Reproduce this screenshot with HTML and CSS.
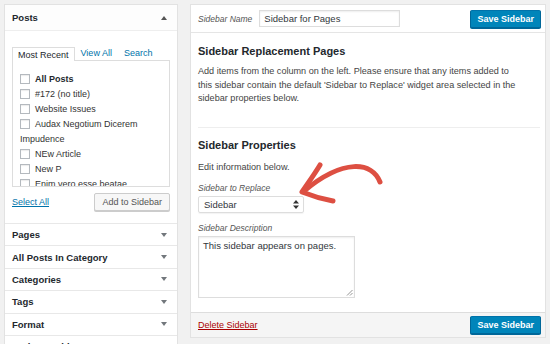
FILE: index.html
```html
<!DOCTYPE html>
<html>
<head>
<meta charset="utf-8">
<link rel="stylesheet" href="styles.css">
</head>
<body>
<div class="page">
  <div class="left">
    <div class="sec posts">
      <div class="sec-head open"><span>Posts</span><span class="tri up"></span></div>
      <div class="posts-body">
        <div class="tabs">
          <span class="tab active">Most Recent</span>
          <span class="tab">View All</span>
          <span class="tab">Search</span>
        </div>
        <div class="tabpanel">
          <div class="item bold"><span class="cb"></span>All Posts</div>
          <div class="item"><span class="cb"></span>#172 (no title)</div>
          <div class="item"><span class="cb"></span>Website Issues</div>
          <div class="item"><span class="cb"></span>Audax Negotium Dicerem</div>
          <div class="item plain">Impudence</div>
          <div class="item"><span class="cb"></span>NEw Article</div>
          <div class="item"><span class="cb"></span>New P</div>
          <div class="item"><span class="cb"></span>Enim vero esse beatae</div>
        </div>
        <div class="actions">
          <a class="link">Select All</a>
          <span class="btn">Add to Sidebar</span>
        </div>
      </div>
    </div>
    <div class="sec row"><span>Pages</span><span class="tri"></span></div>
    <div class="sec row"><span>All Posts In Category</span><span class="tri"></span></div>
    <div class="sec row"><span>Categories</span><span class="tri"></span></div>
    <div class="sec row"><span>Tags</span><span class="tri"></span></div>
    <div class="sec row"><span>Format</span><span class="tri"></span></div>
    <div class="sec row"><span>Author Archives</span><span class="tri"></span></div>
  </div>

  <div class="right">
    <div class="rhead">
      <span class="lbl">Sidebar Name</span>
      <span class="input">Sidebar for Pages</span>
      <span class="btn primary">Save Sidebar</span>
    </div>
    <div class="rbody">
      <h2 class="h first">Sidebar Replacement Pages</h2>
      <p class="txt">Add items from the column on the left. Please ensure that any items added to this sidebar contain the default 'Sidebar to Replace' widget area selected in the sidebar properties below.</p>
      <div class="divider"></div>
      <h2 class="h">Sidebar Properties</h2>
      <p class="txt edit">Edit information below.</p>
      <div class="lbl field">Sidebar to Replace</div>
      <div class="select"><span>Sidebar</span>
        <svg class="updown" width="6" height="9" viewBox="0 0 6 9"><path d="M3 0 L6 3.5 H0 Z M3 9 L6 5.5 H0 Z" fill="#333"/></svg>
      </div>
      <div class="lbl field desc">Sidebar Description</div>
      <div class="textarea">This sidebar appears on pages.
        <svg class="grip" width="7" height="7" viewBox="0 0 7 7"><path d="M6.5 1 L1 6.5 M6.5 4 L4 6.5" stroke="#888" stroke-width="0.9"/></svg>
      </div>
    </div>
    <div class="rfoot">
      <a class="del">Delete Sidebar</a>
      <span class="btn primary">Save Sidebar</span>
    </div>
  </div>

  <svg class="arrow" width="550" height="344" viewBox="0 0 550 344">
    <path d="M380 182 C372 162 344 158 304 191" fill="none" stroke="#dd4f42" stroke-width="5" stroke-linecap="round"/>
    <path d="M320 165 C314 175 308 183 302 192 C312 196 322 199 333 201" fill="none" stroke="#dd4f42" stroke-width="5" stroke-linecap="round" stroke-linejoin="round"/>
  </svg>
</div>
</body>
</html>
```
FILE: styles.css
```css
* { box-sizing: border-box; }
html, body { margin: 0; padding: 0; }
body {
  background: #f1f1f1;
  font-family: "Liberation Sans", Arial, sans-serif;
  font-size: 9px;
  color: #444;
  width: 550px;
  height: 344px;
  overflow: hidden;
}
.page {
  position: relative;
  display: flex;
  align-items: flex-start;
  padding: 4px 0 0 4px;
  gap: 12px;
  height: 344px;
}
.left {
  width: 174px;
  flex: none;
  background: #fff;
  border: 1px solid #e2e2e2;
}
.sec-head {
  height: 26px;
  display: flex;
  align-items: center;
  justify-content: space-between;
  padding: 0 8px 0 7px;
  font-weight: bold;
  font-size: 9.5px;
  color: #23282d;
  background: #fdfdfd;
  border-bottom: 1px solid #eee;
}
.tri {
  width: 0; height: 0;
  border-left: 3px solid transparent;
  border-right: 3px solid transparent;
  border-top: 4px solid #72777c;
  margin-right: 2px;
}
.tri.up {
  border-top: none;
  border-bottom: 4px solid #555;
}
.posts-body {
  padding: 15px 7px 12px 7px;
}
.tabs {
  display: flex;
  height: 14px;
  align-items: stretch;
}
.tab {
  padding: 0 6px;
  display: flex;
  align-items: center;
  color: #0073aa;
  font-size: 9px;
}
.tab.active {
  color: #23282d;
  border: 1px solid #ddd;
  border-bottom: none;
  background: #fff;
  position: relative;
  top: 1px;
  padding: 0 5px;
}
.tabpanel {
  border: 1px solid #ddd;
  height: 127px;
  overflow: hidden;
  padding: 10px 7px 0 7px;
  background: #fff;
}
.item {
  height: 15px;
  display: flex;
  align-items: center;
  color: #333;
  font-size: 9px;
}
.item.bold { font-weight: bold; color: #23282d; }
.cb {
  width: 10px; height: 10px;
  border: 1px solid #b4b9be;
  background: #fff;
  box-shadow: inset 0 1px 1px rgba(0,0,0,0.08);
  margin-right: 5px;
  flex: none;
}
.actions {
  margin-top: 6px;
  display: flex;
  justify-content: space-between;
  align-items: center;
}
.link {
  color: #0073aa;
  text-decoration: underline;
  font-size: 9px;
}
.btn {
  height: 18px;
  display: inline-flex;
  align-items: center;
  padding: 0 7px;
  border: 1px solid #ccc;
  border-radius: 2px;
  background: #f7f7f7;
  box-shadow: 0 1px 0 #ccc;
  color: #555;
  font-size: 9px;
}
.btn.primary {
  background: #0085ba;
  border-color: #0073aa #006799 #006799;
  box-shadow: 0 1px 0 #006799;
  color: #fff;
  font-weight: bold;
  padding: 0 6px;
  height: 18px;
}
.sec.row {
  height: 22.4px;
  border-top: 1px solid #e8e8e8;
  display: flex;
  align-items: center;
  justify-content: space-between;
  padding: 0 8px 0 7px;
  font-weight: bold;
  font-size: 9.5px;
  color: #23282d;
}
.right {
  width: 356px;
  flex: none;
  height: 334px;
  background: #fff;
  border: 1px solid #e2e2e2;
  display: flex;
  flex-direction: column;
}
.rhead {
  height: 28px;
  flex: none;
  display: flex;
  align-items: center;
  padding: 0 4px 0 7px;
  border-bottom: 1px solid #e5e5e5;
}
.lbl {
  font-style: italic;
  color: #555;
  font-size: 8.5px;
}
.input {
  margin-left: 7px;
  width: 141px;
  height: 17px;
  border: 1px solid #ddd;
  box-shadow: inset 0 1px 2px rgba(0,0,0,0.07);
  display: flex;
  align-items: center;
  padding: 0 4px;
  font-size: 9.5px;
  color: #32373c;
}
.rhead .btn { margin-left: auto; }
.rbody {
  flex: 1;
  padding: 0 5px 0 7px;
}
.h {
  margin: 10px 0 0 0;
  font-size: 11px;
  line-height: 14px;
  font-weight: bold;
  color: #23282d;
}
.h.first { margin-top: 11px; }
.txt {
  margin: 7px 0 0 0;
  line-height: 13.5px;
  font-size: 9.1px;
  color: #444;
  padding-right: 20px;
}
.txt.edit { margin-top: 9px; }
.divider {
  margin-top: 21px;
  height: 1px;
  background: #eee;
}
.field {
  margin-top: 8px;
  line-height: 12px;
}
.field.desc { margin-top: 9px; }
.select {
  margin-top: 2px;
  width: 106px;
  height: 17px;
  border: 1px solid #ddd;
  border-radius: 2px;
  box-shadow: 0 1px 1px rgba(0,0,0,0.05);
  display: flex;
  align-items: center;
  justify-content: space-between;
  padding: 0 4px 0 5px;
  font-size: 9.5px;
  color: #32373c;
}
.textarea {
  position: relative;
  margin-top: 2px;
  width: 157px;
  height: 62px;
  border: 1px solid #ddd;
  box-shadow: inset 0 1px 2px rgba(0,0,0,0.07);
  padding: 3px 4px;
  font-size: 9.5px;
  color: #32373c;
}
.grip {
  position: absolute;
  right: 1px;
  bottom: 1px;
}
.rfoot {
  height: 25px;
  flex: none;
  background: #f5f5f5;
  border-top: 1px solid #ddd;
  display: flex;
  align-items: center;
  justify-content: space-between;
  padding: 0 4px 0 7px;
}
.del {
  color: #a00;
  text-decoration: underline;
  font-size: 9px;
}
.arrow {
  position: absolute;
  left: 0;
  top: 0;
  pointer-events: none;
}
```
